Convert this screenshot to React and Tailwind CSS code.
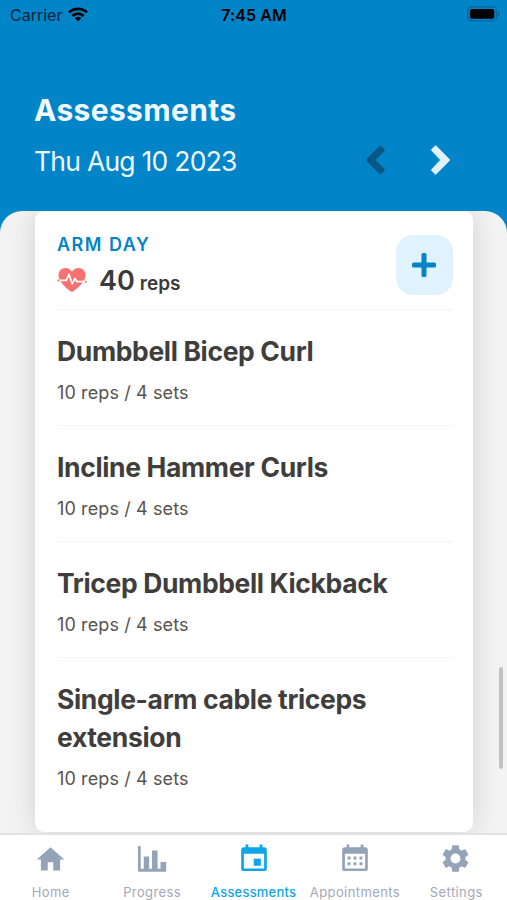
import React from 'react';
import { MdHome, MdSettings } from 'react-icons/md';

const exercises = [
  { name: 'Dumbbell Bicep Curl', detail: '10 reps / 4 sets' },
  { name: 'Incline Hammer Curls', detail: '10 reps / 4 sets' },
  { name: 'Tricep Dumbbell Kickback', detail: '10 reps / 4 sets' },
  { name: 'Single-arm cable triceps extension', detail: '10 reps / 4 sets' },
];

function StatusBar() {
  return (
    <div className="flex h-[30px] items-center justify-between pl-[10px] pr-[7px] text-[16px] leading-none text-black">
      <div className="flex w-[160px] items-center gap-[6px]">
        <span className="text-[#03263c]">Carrier</span>
        <svg width="20" height="15" viewBox="0 0 20 15" fill="none" stroke="#000" strokeWidth="2.7" className="-translate-y-px">
          <path d="M1 5.400a13 13 0 0 1 18 0" />
          <path d="M4.400 8.900a8.100 8.100 0 0 1 11.200 0" />
          <path d="M10 14.400l3.200-3.300a4.600 4.600 0 0 0-6.400 0z" fill="#000" stroke="none" />
        </svg>
      </div>
      <span className="-translate-x-px font-semibold tracking-[0.1px]">7:45 AM</span>
      <div className="flex w-[160px] -translate-y-px justify-end">
        <svg width="33" height="16" viewBox="0 0 33 16">
          <rect x="0.7" y="0.9" width="28.8" height="14" rx="4" fill="none" stroke="#03649a" strokeWidth="1.3" />
          <rect x="2.9" y="3" width="24.4" height="9.8" rx="2" fill="#000" />
          <path d="M31 5.700q1.600.5 1.600 2.200t-1.600 2.200z" fill="#03649a" />
        </svg>
      </div>
    </div>
  );
}

function Chevron({ className }) {
  return (
    <svg width="20" height="30" viewBox="0 0 20 30" className={className} fill="currentColor" stroke="currentColor" strokeWidth="2" strokeLinejoin="round">
      <path d="M4.600 1.500L18 15 4.600 28.500 1.200 25 10.600 15 1.200 5z" />
    </svg>
  );
}

function HeartPulse() {
  return (
    <svg width="30" height="26" viewBox="0 0 30 26" fill="none" className="-translate-y-px">
      <path d="M15 25C12.500 24 1.500 15.500 1.500 8.300 1.500 4 4.600 1 8.400 1c2.900 0 5.200 1.500 6.600 3.800C16.400 2.500 18.700 1 21.600 1c3.800 0 6.900 3 6.900 7.300C28.500 15.500 17.500 24 15 25z" fill="#f87171" />
      <path d="M1 13.400h8.300l2.700-6.200 3.300 9.700 2.600-5.400 2.200 3.200h9.400" stroke="#fff" strokeWidth="1.700" strokeLinejoin="round" />
      <path d="M.6 12.400h1.800v2H.6zM27.800 13.700h1.800v2h-1.800z" fill="#f87171" />
    </svg>
  );
}

function BarsIcon() {
  return (
    <svg width="30" height="28" viewBox="0 0 30 28" fill="currentColor" className="-translate-y-px">
      <path d="M1 1h2.700v22.800H6.800V11.600h5.300v12.200h2.900V5.600h5.600v18.200h2.900v-6.800H29.200V26.800H2a1 1 0 0 1-1-1z" />
    </svg>
  );
}

function TodayIcon() {
  return (
    <svg width="26" height="28" viewBox="0 0 27 29" fill="currentColor" className="-translate-y-0.5">
      <path fillRule="evenodd" d="M4.700.5h2.900v2.800h11.800V.5h2.900v2.800H24a2.800 2.800 0 0 1 2.800 2.800v19.200a2.800 2.800 0 0 1-2.800 2.800H3a2.800 2.800 0 0 1-2.800-2.800V6.100A2.800 2.800 0 0 1 3 3.300h1.700zM3 10v15.300h21V10z" />
      <path d="M13.200 15.200h7.400v7.400H13.200z" />
    </svg>
  );
}

function MonthIcon() {
  return (
    <svg width="26" height="28" viewBox="0 0 27 29" fill="currentColor" className="-translate-y-0.5">
      <path fillRule="evenodd" d="M4.700.5h2.900v2.800h11.800V.5h2.900v2.800H24a2.800 2.800 0 0 1 2.800 2.800v19.200a2.800 2.800 0 0 1-2.800 2.800H3a2.800 2.800 0 0 1-2.800-2.800V6.100A2.800 2.800 0 0 1 3 3.300h1.700zM3 10v15.300h21V10z" />
      <path d="M5.800 13h3v3h-3zM12 13h3v3h-3zM18.200 13h3v3h-3zM5.800 18.900h3v3h-3zM12 18.900h3v3h-3zM18.200 18.900h3v3h-3z" />
    </svg>
  );
}

const tabs = [
  { label: 'Home', icon: <MdHome size={33} /> },
  { label: 'Progress', icon: <BarsIcon /> },
  { label: 'Assessments', icon: <TodayIcon />, active: true },
  { label: 'Appointments', icon: <MonthIcon /> },
  { label: 'Settings', icon: <MdSettings size={33} className="-translate-x-px -translate-y-px" /> },
];

export default function App() {
  return (
    <div className="flex h-[900px] w-[507px] flex-col overflow-hidden bg-[#0284c9] font-[Inter,'Liberation_Sans',sans-serif]">
      <header className="flex h-[211px] shrink-0 flex-col">
        <StatusBar />
        <div className="flex flex-col pl-[34px] pr-[56px] pt-[60px]">
          <h1 className="text-[30px] font-bold leading-[40px] tracking-[0.35px] text-[#f0f9ff]">Assessments</h1>
          <div className="flex h-[60px] items-center justify-between">
            <span className="pt-[2px] text-[26.5px] leading-[40px] tracking-[-0.75px] text-[#f0f9ff]">Thu Aug 10 2023</span>
            <div className="flex gap-[46px]">
              <Chevron className="rotate-180 text-[#075985]" />
              <Chevron className="text-[#e0f2fe]" />
            </div>
          </div>
        </div>
      </header>

      <main className="relative flex h-[622px] shrink-0 overflow-hidden rounded-t-[22px] bg-[#f3f3f3] pl-[35px]">
        <section className="h-[621px] w-[438px] rounded-[9px] bg-white pl-[22px] pr-[20px] shadow-[0_0_28px_rgba(0,0,0,0.14)]">
          <div className="flex h-[99px] justify-between border-b border-[#f5f5f4]">
            <div className="pt-[21px]">
              <div className="text-[18px] font-semibold leading-[25px] tracking-[1.5px] text-[#0284c7]">ARM DAY</div>
              <div className="flex h-[47px] items-center text-[#3b3a38]">
                <HeartPulse />
                <div className="ml-[12px] flex items-baseline gap-[5px]">
                  <span className="text-[27px] font-semibold leading-[38px]">40</span>
                  <span className="text-[19px] font-semibold">reps</span>
                </div>
              </div>
            </div>
            <button className="mt-[24px] flex h-[60px] w-[57px] items-center justify-center rounded-[17px] bg-[#e0f2fe] pr-[2px]">
              <svg width="24" height="24" viewBox="0 0 24 24" fill="#0284c7">
                <rect x="0" y="9.500" width="24" height="5" rx="1.600" />
                <rect x="9.500" y="0" width="5" height="24" rx="1.600" />
              </svg>
            </button>
          </div>
          {exercises.map((e) => (
            <div key={e.name} className="border-b border-[#f5f5f4] pb-[18px] pt-[22px] last:border-b-0">
              <h2 className="text-[26.5px] font-bold leading-[38px] tracking-[-0.36px] text-[#403e3c]">{e.name}</h2>
              <p className="mt-[9px] text-[18px] leading-[28px] tracking-[0.12px] text-[#57534e]">{e.detail}</p>
            </div>
          ))}
        </section>
        <div className="absolute right-[4px] top-[456px] h-[102px] w-[4px] rounded-full bg-[#c2c2c2]" />
      </main>

      <nav className="flex h-[67px] shrink-0 border-t-2 border-[#e2e2e2] bg-white">
        {tabs.map((t) => (
          <div key={t.label} className={`flex w-0 flex-1 flex-col items-center ${t.active ? 'text-[#0ea5e9]' : 'text-[#94a3b8]'}`}>
            <div className="mt-[7px] flex h-[35px] shrink-0 items-center justify-center">{t.icon}</div>
            <span className={`mt-[7px] shrink-0 whitespace-nowrap text-[13px] leading-[16px] ${t.active ? 'font-medium tracking-[0.2px]' : 'tracking-[0.4px] text-[#a3a8b8]'}`}>{t.label}</span>
          </div>
        ))}
      </nav>
    </div>
  );
}
